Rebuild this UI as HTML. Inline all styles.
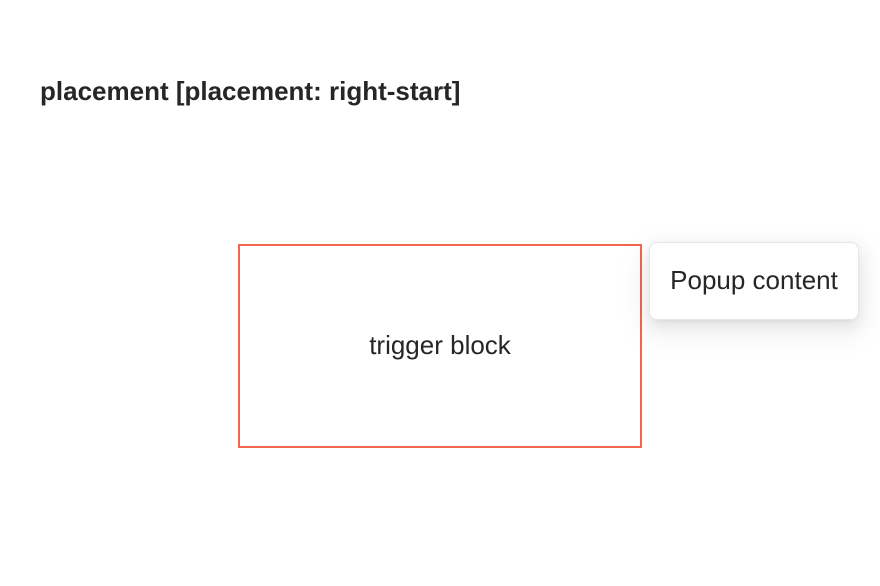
<!DOCTYPE html>
<html><head><style>
body{margin:0;width:880px;height:586px;background:#fff;font-family:"Liberation Sans",sans-serif;color:#262626;position:relative;overflow:hidden}
h{position:absolute;left:40px;top:76px;font-size:26px;font-weight:bold;white-space:nowrap}
.t{position:absolute;left:238px;top:244px;width:400px;height:198px;padding-bottom:2px;border:2px solid #f26552;display:flex;align-items:center;justify-content:center;font-size:26px}
.p{position:absolute;left:649px;top:242px;width:208px;height:74px;padding-bottom:2px;border:1px solid #e6e6e6;border-radius:8px;background:#fff;box-shadow:0 6px 16px rgba(0,0,0,.08),0 3px 6px -4px rgba(0,0,0,.12),0 9px 28px 8px rgba(0,0,0,.05);display:flex;align-items:center;justify-content:center;font-size:26px}
</style></head><body>
<h>placement [placement: right-start]</h>
<div class="t">trigger block</div>
<div class="p">Popup content</div>
</body></html>
